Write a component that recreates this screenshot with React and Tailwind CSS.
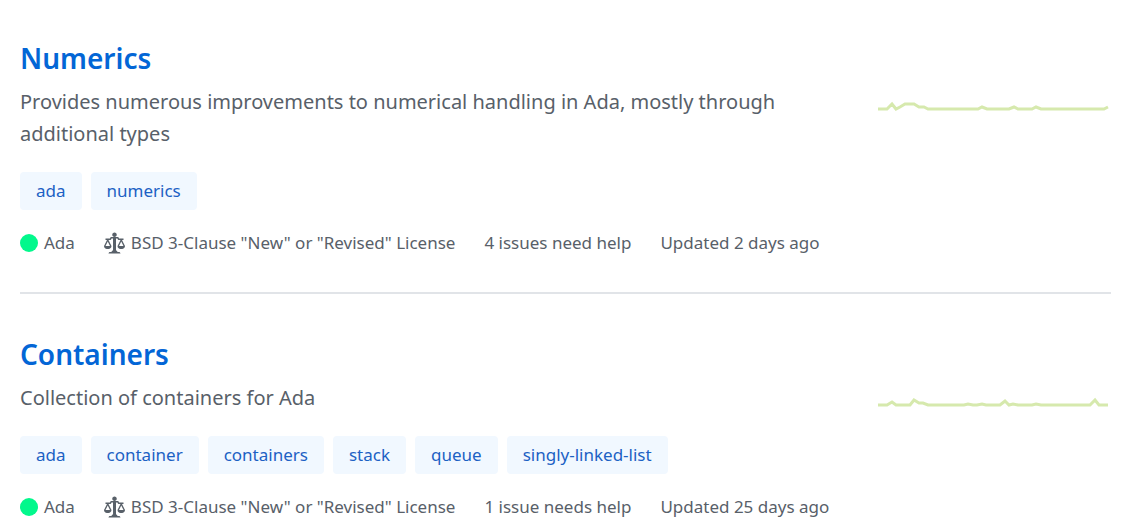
const repos = [
  {
    name: "Numerics",
    description: "Provides numerous improvements to numerical handling in Ada, mostly through additional types",
    topics: ["ada", "numerics"],
    issues: "4 issues need help",
    updated: "Updated 2 days ago",
    trend: "0,23 9,23 14,18 18,23 22,21 27,18 36,18 41,21 46,21 50,23 100,23 104,21 109,23 131,23 136,21 140,23 154,23 158,21 163,23 226,23 230,21",
  },
  {
    name: "Containers",
    description: "Collection of containers for Ada",
    topics: ["ada", "container", "containers", "stack", "queue", "singly-linked-list"],
    issues: "1 issue needs help",
    updated: "Updated 25 days ago",
    trend: "0,23 9,23 14,20 18,23 32,23 36,18 41,21 45,21 50,23 86,23 90,22 95,23 99,23 104,22 108,23 122,23 127,19 131,23 135,22 140,23 154,23 158,22 163,23 212,23 217,18 221,23 230,23",
  },
]

function LawIcon() {
  return (
    <svg className="h-6 w-[21px] shrink-0" viewBox="0 0 14 16" fill="currentColor" aria-hidden="true">
      <path
        fillRule="evenodd"
        d="M7 4c-.83 0-1.5-.67-1.5-1.5S6.17 1 7 1s1.5.67 1.5 1.5S7.83 4 7 4zm7 6c0 1.11-.89 2-2 2h-1c-1.11 0-2-.89-2-2l2-4h-1c-.55 0-1-.45-1-1H8v8c.42 0 1 .45 1 1h1c.42 0 1 .45 1 1H3c0-.55.58-1 1-1h1c0-.55.58-1 1-1h.03L6 5H5c0 .55-.45 1-1 1H3l2 4c0 1.11-.89 2-2 2H2c-1.11 0-2-.89-2-2l2-4H1V5h3c0-.55.45-1 1-1h4c.55 0 1 .45 1 1h3v1h-1l2 4zM2.5 7L1 10h3L2.5 7zM13 10l-1.5-3-1.5 3h3z"
      />
    </svg>
  )
}

function Sparkline({ points }) {
  return (
    <svg className="h-[30px] w-[233px] shrink-0" viewBox="0 0 233 30" fill="none" aria-hidden="true">
      <polyline points={points} stroke="#d6e9ad" strokeWidth="3" />
    </svg>
  )
}

function Repo({ repo }) {
  return (
    <li className="border-b-2 border-[#e1e4e8] pt-[38px] pb-[33px] first:pt-9 last:border-b-0 last:pb-0">
      <h3 className="text-[28px] leading-11 font-semibold">
        <a href="#" className="text-[#0366d6] hover:underline">{repo.name}</a>
      </h3>

      <div className="flex items-start justify-between pt-1.5">
        <p className="w-3/4 pr-6 text-xl leading-8">{repo.description}</p>
        <Sparkline points={repo.trend} />
      </div>

      {/* Topics */}
      <div className="mt-[22px] flex flex-wrap gap-[9px]">
        {repo.topics.map((topic) => (
          <a
            key={topic}
            href="#"
            className="rounded bg-[#f1f8ff] px-4 text-[17px] leading-[38px] text-[#1c61c4]"
          >
            {topic}
          </a>
        ))}
      </div>

      {/* Language, license and activity */}
      <div className="mt-[17px] flex flex-wrap gap-x-[29px] text-[17px] leading-8">
        <span className="flex items-center gap-1.5">
          <span className="size-[18px] rounded-full bg-[#02f88c]" />
          Ada
        </span>
        <span className="flex items-center gap-1.5">
          <LawIcon />
          BSD 3-Clause "New" or "Revised" License
        </span>
        <a href="#">{repo.issues}</a>
        <span>{repo.updated}</span>
      </div>
    </li>
  )
}

export default function App() {
  return (
    <main className="bg-white px-5 font-['Noto_Sans','Open_Sans',sans-serif] text-[#586069]">
      <ul>
        {repos.map((repo) => (
          <Repo key={repo.name} repo={repo} />
        ))}
      </ul>
    </main>
  )
}
